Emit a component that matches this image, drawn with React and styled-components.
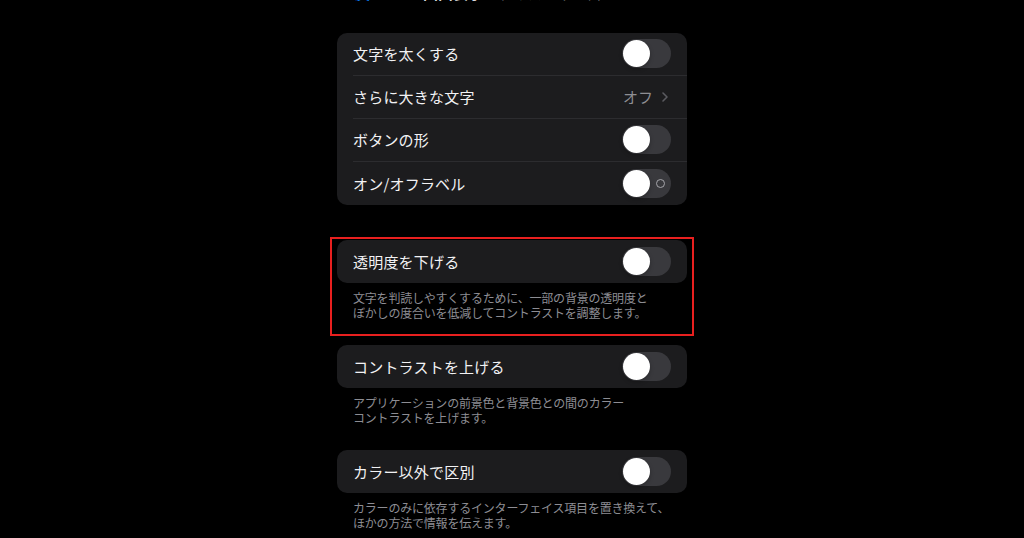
import React from 'react';
import styled, { createGlobalStyle } from 'styled-components';
import { ChevronLeft, ChevronRight } from 'lucide-react';

const GlobalStyle = createGlobalStyle`
  html, body {
    margin: 0;
    padding: 0;
    background: #000000;
  }
  body {
    font-family: 'Noto Sans CJK JP', 'Noto Sans', sans-serif;
    color: #ffffff;
    overflow: hidden;
  }
`;

const groups = [
  {
    rows: [
      { label: '文字を太くする', type: 'toggle' },
      { label: 'さらに大きな文字', type: 'link', value: 'オフ' },
      { label: 'ボタンの形', type: 'toggle' },
      { label: 'オン/オフラベル', type: 'toggle', showLabel: true },
    ],
  },
  {
    highlight: true,
    rows: [{ label: '透明度を下げる', type: 'toggle' }],
    footer: [
      '文字を判読しやすくするために、一部の背景の透明度と',
      'ぼかしの度合いを低減してコントラストを調整します。',
    ],
  },
  {
    rows: [{ label: 'コントラストを上げる', type: 'toggle' }],
    footer: [
      'アプリケーションの前景色と背景色との間のカラー',
      'コントラストを上げます。',
    ],
  },
  {
    rows: [{ label: 'カラー以外で区別', type: 'toggle' }],
    footer: [
      'カラーのみに依存するインターフェイス項目を置き換えて、',
      'ほかの方法で情報を伝えます。',
    ],
  },
];

const Toggle = ({ showLabel }) => (
  <Track>
    <Knob />
    {showLabel && <OffMark />}
  </Track>
);

const Section = ({ group }) => {
  const body = (
    <>
      <Card>
        {group.rows.map((row, i) => (
          <Row key={row.label}>
            <RowInner $last={i === group.rows.length - 1}>
              <Label>{row.label}</Label>
              {row.type === 'toggle' ? (
                <Toggle showLabel={row.showLabel} />
              ) : (
                <Value>
                  {row.value}
                  <ChevronRight size={16} strokeWidth={2.4} color="#5b5b60" />
                </Value>
              )}
            </RowInner>
          </Row>
        ))}
      </Card>
      {group.footer && (
        <Footer>
          {group.footer.map((line) => (
            <div key={line}>{line}</div>
          ))}
        </Footer>
      )}
    </>
  );

  return group.highlight ? (
    <Highlight>{body}</Highlight>
  ) : (
    <Group $hasFooter={!!group.footer}>{body}</Group>
  );
};

const App = () => (
  <>
    <GlobalStyle />
    <Page>
      <Nav>
        <Back>
          <ChevronLeft size={22} strokeWidth={2.6} color="#0a84ff" />
          戻る
        </Back>
        <Title>画面表示とテキストサイズ</Title>
      </Nav>
      <List>
        {groups.map((g, i) => (
          <Section key={i} group={g} />
        ))}
      </List>
    </Page>
  </>
);

export default App;

const Page = styled.div`
  width: 350px;
  margin: 0 auto;
  display: flex;
  flex-direction: column;
`;

const Nav = styled.div`
  height: 20px;
  margin-top: -18px;
  margin-bottom: 31px;
  display: flex;
  align-items: center;
  font-size: 15px;
`;

const Back = styled.div`
  display: flex;
  align-items: center;
  color: #0a84ff;
  margin-left: -6px;
  gap: 2px;
`;

const Title = styled.div`
  margin-left: 38px;
  color: #d8d8dc;
  font-weight: 600;
`;

const List = styled.div`
  display: flex;
  flex-direction: column;
`;

const Group = styled.div`
  display: flex;
  flex-direction: column;
  margin-bottom: ${({ $hasFooter }) => ($hasFooter ? '25px' : '35px')};
`;

const Highlight = styled.div`
  display: flex;
  flex-direction: column;
  margin: -3px -7px 9px;
  padding: 1px 5px 14px;
  border: 2px solid #e8201f;
`;

const Card = styled.div`
  background: #1c1c1e;
  border-radius: 10px;
  overflow: hidden;
`;

const Row = styled.div`
  height: 43px;
  padding-left: 16px;
  display: flex;
`;

const RowInner = styled.div`
  flex: 1;
  display: flex;
  align-items: center;
  justify-content: space-between;
  padding-right: 16px;
  padding-bottom: 1px;
  border-bottom: ${({ $last }) => ($last ? 'none' : '1px solid #2c2c2f')};
`;

const Label = styled.span`
  font-size: 15px;
  color: #f2f2f4;
  letter-spacing: 0.2px;
`;

const Value = styled.span`
  display: flex;
  align-items: center;
  gap: 4px;
  font-size: 15px;
  color: #8e8e93;
  margin-right: -2px;
`;

const Track = styled.div`
  position: relative;
  width: 49px;
  height: 29px;
  border-radius: 15px;
  background: #39393d;
`;

const Knob = styled.div`
  position: absolute;
  top: 1px;
  left: 1px;
  width: 27px;
  height: 27px;
  border-radius: 50%;
  background: #ffffff;
  box-shadow: 0 2px 4px rgba(0, 0, 0, 0.25);
`;

const OffMark = styled.div`
  position: absolute;
  top: 10px;
  right: 6px;
  width: 7px;
  height: 7px;
  border-radius: 50%;
  border: 1.3px solid #a5a5aa;
`;

const Footer = styled.div`
  padding: 7px 16px 0;
  font-size: 12px;
  line-height: 15px;
  color: #8d8d93;
  letter-spacing: -0.2px;
`;
